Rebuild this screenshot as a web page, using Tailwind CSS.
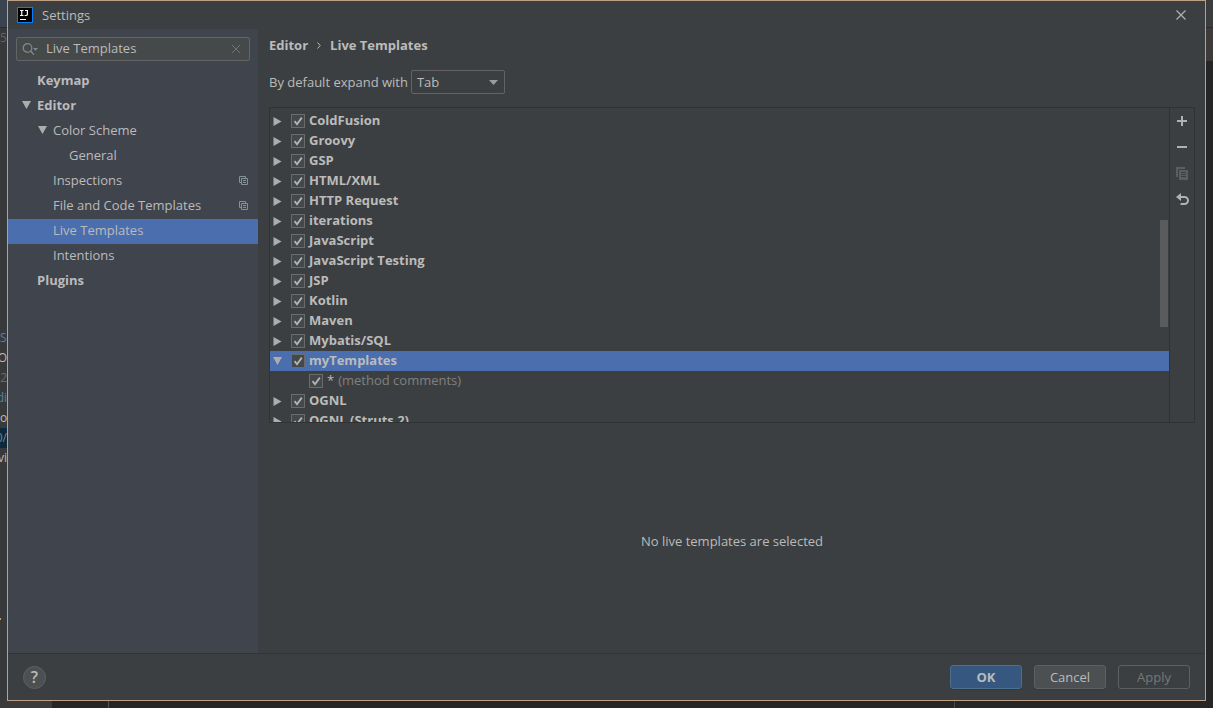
<!DOCTYPE html>
<html lang="en">
<head>
<meta charset="UTF-8">
<meta name="viewport" content="width=device-width, initial-scale=1.0">
<title>Settings</title>
<script src="https://cdn.jsdelivr.net/npm/@tailwindcss/browser@4"></script>
</head>
<body class="h-screen overflow-hidden flex flex-col bg-[#262626] text-[#bbbbbb] text-[13px] leading-5 font-['Open_Sans','Noto_Sans_CJK_SC',sans-serif]">

<!-- shared icons -->
<svg class="hidden">
    <symbol id="right" viewBox="0 0 8 9"><path d="M0 0L8 4.5L0 9Z" fill="#adadad"/></symbol>
    <symbol id="down" viewBox="0 0 9 8"><path d="M0 0H9L4.5 8Z" fill="#adadad"/></symbol>
    <symbol id="tick" viewBox="0 0 14 14"><path d="M3.5 7.2L6 10.2L10.8 3.6" fill="none" stroke="#b4b4b4" stroke-width="1.8"/></symbol>
    <symbol id="project" viewBox="0 0 9 9"><path d="M2.5 2.5H8.5V8.5H2.5ZM2.5 6.5H.5V.5H6.5V2.5M4 4.5H7M4 6.5H7" fill="none" stroke="#84919b"/></symbol>
</svg>

<div class="flex-1 min-h-0 flex">
    <!-- editor behind the dialog, left edge -->
    <div class="w-[7px] shrink-0 overflow-hidden bg-[#37393a] flex flex-col whitespace-nowrap text-xs leading-5">
        <div class="h-7 shrink-0 bg-[#3a4450] border-b border-[#2b2b2b]"></div>
        <div class="h-5 shrink-0 text-[#606366]">58</div>
        <div class="mt-[280px] text-[#5382a1]">Se</div>
        <div class="flex justify-end">rO</div>
        <div class="flex justify-end text-[#6c6c6c]">2</div>
        <div class="flex justify-end text-[#5382a1]">di</div>
        <div>ov</div>
        <div class="flex justify-end bg-[#0d293e] text-[#808080]">0/</div>
        <div class="flex justify-end">vi</div>
        <div class="mt-[150px] h-[2px] w-px bg-[#cc9a5a]"></div>
    </div>

    <div class="flex-1 min-w-0 flex flex-col border border-[#c0a084] bg-[#3c3f41]">
        <header class="h-7 shrink-0 flex items-center pl-[9px] pr-[19px]">
            <svg class="size-4" viewBox="0 0 16 16">
                <rect width="16" height="16" fill="#087cfa"/>
                <rect x="1" y="1" width="14" height="14" fill="#000"/>
                <path d="M3 3.5H6.5M4.75 3.5V8.5M3 8.5H6.5M8 3.5H11M10.4 3.5V7.2Q10.4 8.5 9 8.5H7.6M3 12.5H9" fill="none" stroke="#fff" stroke-width="1.2"/>
            </svg>
            <h1 class="ml-[9px] flex-1">Settings</h1>
            <button aria-label="Close"><svg class="size-[10px]" viewBox="0 0 10 10"><path d="M.5 .5L9.5 9.5M9.5 .5L.5 9.5" stroke="#b0b0b0" stroke-width="1.2"/></svg></button>
        </header>

        <div class="flex-1 min-h-0 flex">
            <aside class="w-[250px] shrink-0 bg-[#40444d] pt-2">
                <div class="mx-2 h-6 flex items-center px-[5px] rounded-xs border border-[#646464] bg-[#45494a]">
                    <svg class="w-[17px] h-3" viewBox="0 0 17 12"><circle cx="5.5" cy="5" r="4.3" fill="none" stroke="#7f8b91" stroke-width="1.2"/><path d="M8.5 8L12 11.7" stroke="#7f8b91" stroke-width="1.4"/><path d="M11 5H16L13.5 7.8Z" fill="#7f8b91"/></svg>
                    <input aria-label="Search settings" value="Live Templates" class="flex-1 min-w-0 ml-[7px] pb-[2px] outline-none">
                    <button aria-label="Clear" class="mr-1"><svg class="size-2" viewBox="0 0 8 8"><path d="M0 0L8 8M8 0L0 8" stroke="#6e7376"/></svg></button>
                </div>
                <nav class="mt-2">
                    <a href="#" class="flex items-center h-[25px] pb-[3px] pl-[29px] font-bold">Keymap</a>
                    <a href="#" class="flex items-center h-[25px] pb-[3px] pl-[14px] font-bold"><svg class="w-[9px] h-2 mr-[6px]"><use href="#down"/></svg>Editor</a>
                    <a href="#" class="flex items-center h-[25px] pb-[3px] pl-[30px]"><svg class="w-[9px] h-2 mr-[6px]"><use href="#down"/></svg>Color Scheme</a>
                    <a href="#" class="flex items-center h-[25px] pb-[3px] pl-[61px]">General</a>
                    <a href="#" class="flex items-center h-[25px] pb-[3px] pl-[45px] pr-[10px] justify-between">Inspections<svg class="size-[9px]"><use href="#project"/></svg></a>
                    <a href="#" class="flex items-center h-[25px] pb-[3px] pl-[45px] pr-[10px] justify-between">File and Code Templates<svg class="size-[9px]"><use href="#project"/></svg></a>
                    <a href="#" class="flex items-center h-[25px] pb-[3px] pl-[45px] bg-[#4b6eaf]">Live Templates</a>
                    <a href="#" class="flex items-center h-[25px] pb-[3px] pl-[45px]">Intentions</a>
                    <a href="#" class="flex items-center h-[25px] pb-[3px] pl-[29px] font-bold">Plugins</a>
                </nav>
            </aside>

            <main class="flex-1 min-w-0 flex flex-col pl-[11px] pr-[10px] pt-[6px]">
                <div class="flex items-center h-5 font-bold">
                    Editor
                    <svg class="w-1 h-[7px] mx-[9px]" viewBox="0 0 4 7"><path d="M.5 .5L3.2 3.5L.5 6.5" fill="none" stroke="#bbbbbb"/></svg>
                    Live Templates
                </div>
                <div class="flex items-center mt-[15px]">
                    <label for="expand">By default expand with</label>
                    <div class="relative ml-[3px]">
                        <select id="expand" class="appearance-none block w-[94px] h-6 pl-[5px] leading-5 rounded-xs border border-[#646464] bg-[#3c3f41]">
                            <option>Tab</option>
                            <option>Enter</option>
                            <option>Space</option>
                        </select>
                        <svg class="absolute right-[7px] top-[10px] w-[9px] h-[5px] pointer-events-none" viewBox="0 0 9 5"><path d="M0 0H9L4.5 5Z" fill="#9a9da0"/></svg>
                    </div>
                </div>

                <div class="mt-[13px] h-[316px] shrink-0 flex border border-[#323232]">
                    <div class="relative flex-1 min-w-0 overflow-hidden border-r border-[#323232]">
                        <ul id="templates" class="pt-[3px]"></ul>
                        <div class="absolute right-px top-[112px] w-2 h-[107px] bg-[#595b5d]"></div>
                    </div>
                    <div class="w-6 flex flex-col items-center">
                        <button aria-label="Add" class="h-[26px]"><svg class="size-3" viewBox="0 0 12 12"><path d="M6 1V11M1 6H11" stroke="#afb1b3" stroke-width="2"/></svg></button>
                        <button aria-label="Remove" class="h-[26px]"><svg class="size-3" viewBox="0 0 12 12"><path d="M1 6H11" stroke="#afb1b3" stroke-width="2"/></svg></button>
                        <button aria-label="Duplicate" class="h-[26px]" disabled><svg class="w-3 h-[13px]" viewBox="0 0 12 13"><path d="M0 0H9V2H2V10H0Z" fill="#5b5d5f"/><path d="M3 3H12V13H3Z" fill="#5b5d5f"/><path d="M5 5.5H10M5 7.5H10M5 9.5H10" stroke="#3c3f41"/></svg></button>
                        <button aria-label="Restore" class="h-[26px]"><svg class="w-[13px] h-3" viewBox="0 0 13 12"><path d="M3 4H8.5A3.3 3.3 0 0 1 8.5 11H4.5" fill="none" stroke="#afb1b3" stroke-width="2"/><path d="M0 4L5 0V8Z" fill="#afb1b3"/></svg></button>
                    </div>
                </div>

                <div class="flex-1 flex items-center justify-center pt-[6px]">No live templates are selected</div>
            </main>
        </div>

        <footer class="h-[47px] shrink-0 flex items-center gap-3 border-t border-[#323436] px-[15px]">
            <button aria-label="Help" class="size-[23px] mr-auto rounded-full border border-[#5e6062] bg-[#4c5052] flex items-center justify-center text-[16px] font-semibold">?</button>
            <button class="w-[72px] h-6 rounded-[3px] border border-[#4c708c] bg-[#365880] font-bold flex items-center justify-center shadow-[0_1px_0_#36393a]">OK</button>
            <button class="w-[72px] h-6 rounded-[3px] border border-[#5e6060] bg-[#4c5052] flex items-center justify-center shadow-[0_1px_0_#36393a]">Cancel</button>
            <button class="w-[72px] h-6 rounded-[3px] border border-[#5e6060] text-[#777777] flex items-center justify-center" disabled>Apply</button>
        </footer>
    </div>

    <!-- editor behind the dialog, right edge -->
    <div class="w-[7px] shrink-0 bg-[#262626]">
        <div class="h-7 bg-[#3a3c3e] border-b border-[#2b2b2b]"></div>
        <div class="h-[33px] bg-[#3d3a39]"></div>
    </div>
</div>

<div class="h-[7px] shrink-0 flex">
    <div class="w-[52px] bg-[#393b3d]"></div>
    <div class="w-[57px] border-r border-[#555555]"></div>
    <div class="flex-1 border-r border-[#484848]"></div>
    <div class="w-[258px]"></div>
</div>

<script>
    const groups = ['ColdFusion', 'Groovy', 'GSP', 'HTML/XML', 'HTTP Request', 'iterations', 'JavaScript', 'JavaScript Testing', 'JSP', 'Kotlin', 'Maven', 'Mybatis/SQL', 'myTemplates', 'OGNL', 'OGNL (Struts 2)'];
    const box = `<span class="grid size-[14px] mr-1">
        <input type="checkbox" checked class="appearance-none col-start-1 row-start-1 border border-[#6b6b6b] bg-[#43494a]">
        <svg class="size-[14px] col-start-1 row-start-1 pointer-events-none"><use href="#tick"/></svg>
    </span>`;
    let html = '';
    for (const name of groups) {
        const open = name === 'myTemplates';
        html += `<li class="h-5 flex items-center pl-[3px] ${open ? 'bg-[#4b6eaf]' : ''}">
            <svg class="w-[9px] mr-[9px] ${open ? 'h-2' : 'h-[9px]'}"><use href="#${open ? 'down' : 'right'}"/></svg>
            <label class="flex items-center font-bold">${box}<span class="pb-[2px]">${name}</span></label>
        </li>`;
        if (open) {
            html += `<li class="h-5 flex items-center pl-[39px]">
                <label class="flex items-center">${box}<span class="pb-[2px]">*<span class="ml-1 text-[#808080]">(method comments)</span></span></label>
            </li>`;
        }
    }
    document.getElementById('templates').innerHTML = html;
</script>
</body>
</html>
